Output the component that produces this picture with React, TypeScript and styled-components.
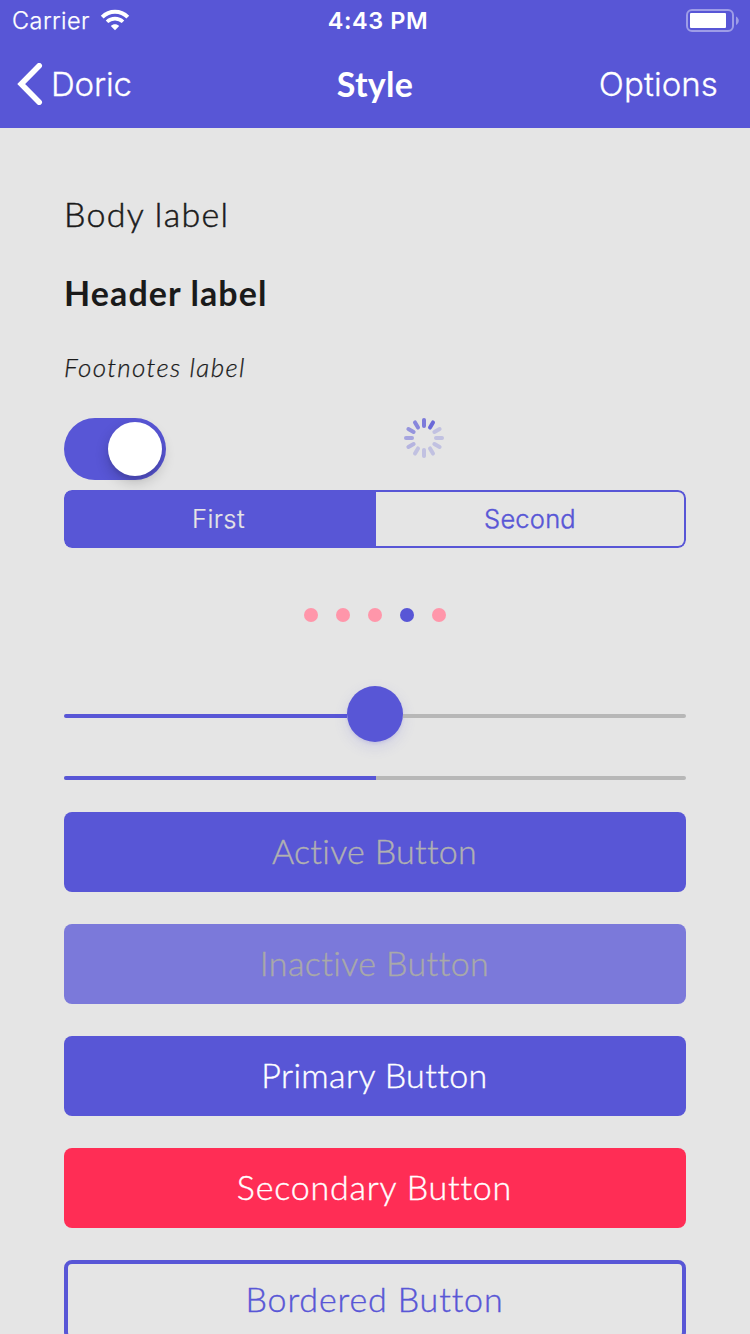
import React from "react";
import styled, { createGlobalStyle } from "styled-components";

const primary = "#5856d6";
const secondary = "#ff2d55";
const background = "#e5e5e5";
const track = "#b7b7b7";

const system = `Inter, "Liberation Sans", sans-serif`;
const brand = `Lato, "Liberation Sans", sans-serif`;

const GlobalStyle = createGlobalStyle`
  *, *::before, *::after { box-sizing: border-box; }
  html, body { margin: 0; padding: 0; height: 1334px; overflow: hidden; background: ${background}; }
`;

const Screen = styled.div`
  width: 750px;
  height: 1334px;
  overflow: hidden;
  background: ${background};
  display: flex;
  flex-direction: column;
`;

const Header = styled.header`
  flex: none;
  height: 128px;
  background: ${primary};
  color: #fff;
  font-family: ${system};
`;

const StatusBar = styled.div`
  display: grid;
  grid-template-columns: 1fr auto 1fr;
  align-items: center;
  height: 40px;
  padding: 0 11px 0 12px;
  font-size: 23.5px;
  line-height: 42px;
`;

const Carrier = styled.div`
  display: flex;
  align-items: center;
  gap: 11px;
  font-weight: 300;
  letter-spacing: 0.43px;
  -webkit-text-stroke: 0.25px currentColor;
`;

const Clock = styled.div`
  font-weight: 600;
  letter-spacing: 0.6px;
  padding-left: 5px;
`;

const BatterySlot = styled.div`
  display: flex;
  justify-content: flex-end;
`;

const NavBar = styled.nav`
  display: grid;
  grid-template-columns: 1fr auto 1fr;
  align-items: center;
  height: 88px;
  padding: 0 32px 0 17px;
  font-size: 33px;
  line-height: 88px;
  font-weight: 300;
  -webkit-text-stroke: 0.3px currentColor;
`;

const BackButton = styled.div`
  display: flex;
  align-items: center;
  gap: 8px;
  letter-spacing: -0.2px;
`;

const Title = styled.h1`
  margin: 0;
  padding-left: 15px;
  font: 700 34px/88px ${brand};
  letter-spacing: 0.3px;
  -webkit-text-stroke: 0;
`;

const OptionsButton = styled.div`
  text-align: right;
  letter-spacing: 0.1px;
`;

const Content = styled.main`
  display: flex;
  flex-direction: column;
  padding: 63px 64px 0;
`;

const Label = styled.div<{ $kind: "body" | "header" | "footnote" }>`
  height: ${(p) => (p.$kind === "body" ? 46 : 50)}px;
  line-height: ${(p) => (p.$kind === "body" ? 46 : 50)}px;
  margin-bottom: ${(p) => (p.$kind === "footnote" ? 26 : p.$kind === "body" ? 31 : 24)}px;
  color: #1a1a1a;
  font-family: ${brand};
  font-size: ${(p) => (p.$kind === "footnote" ? 26 : 34)}px;
  font-weight: ${(p) => (p.$kind === "header" ? 700 : 300)};
  font-style: ${(p) => (p.$kind === "footnote" ? "italic" : "normal")};
  letter-spacing: ${(p) => (p.$kind === "body" ? 1.3 : p.$kind === "header" ? 1.1 : 1.35)}px;
  -webkit-text-stroke: ${(p) => (p.$kind === "header" ? 0 : p.$kind === "body" ? 0.5 : 0.25)}px currentColor;
`;

const ControlRow = styled.div`
  display: grid;
  grid-template-columns: 1fr 1fr;
  height: 62px;
  margin-bottom: 10px;
`;

const Switch = styled.div`
  display: flex;
  justify-content: flex-end;
  width: 102px;
  height: 62px;
  padding: 4px;
  border-radius: 31px;
  background: ${primary};
`;

const SwitchKnob = styled.div`
  width: 54px;
  height: 54px;
  border-radius: 50%;
  background: #fff;
  box-shadow: 0 6px 14px rgba(0, 0, 0, 0.2), 0 4px 3px rgba(0, 0, 0, 0.06);
`;

const SpinnerSlot = styled.div`
  padding-left: 29px;
  line-height: 0;
`;

const Segmented = styled.div`
  display: flex;
  height: 58px;
  border-radius: 8px;
  overflow: hidden;
  margin-bottom: 60px;
`;

const Segment = styled.div<{ $selected?: boolean }>`
  flex: ${(p) => (p.$selected ? "0 0 312px" : "1")};
  padding-right: ${(p) => (p.$selected ? 3 : 0)}px;
  border: 2px solid ${primary};
  border-left-width: ${(p) => (p.$selected ? 2 : 0)}px;
  border-radius: ${(p) => (p.$selected ? "8px 0 0 8px" : "0 8px 8px 0")};
  text-align: center;
  font: 300 25.5px/54px ${system};
  letter-spacing: ${(p) => (p.$selected ? 0.4 : 0.2)}px;
  -webkit-text-stroke: ${(p) => (p.$selected ? 0.2 : 0.4)}px currentColor;
  color: ${(p) => (p.$selected ? background : primary)};
  background: ${(p) => (p.$selected ? primary : "transparent")};
`;

const Pager = styled.div`
  display: flex;
  justify-content: center;
  gap: 18px;
  margin-bottom: 64px;
`;

const Dot = styled.span<{ $current: boolean }>`
  width: 14px;
  height: 14px;
  border-radius: 50%;
  background: ${(p) => (p.$current ? primary : "#ff96aa")};
`;

const Slider = styled.div`
  display: flex;
  align-items: center;
  height: 56px;
  margin-bottom: 34px;
`;

const SliderTrack = styled.div<{ $filled?: boolean }>`
  flex: 1;
  height: 4px;
  margin-top: 4px;
  border-radius: ${(p) => (p.$filled ? "2px 0 0 2px" : "0 2px 2px 0")};
  background: ${(p) => (p.$filled ? primary : track)};
`;

const SliderThumb = styled.div`
  width: 56px;
  height: 56px;
  border-radius: 50%;
  background: ${primary};
  box-shadow: 0 5px 14px rgba(88, 86, 214, 0.15), 0 2px 3px rgba(88, 86, 214, 0.12);
`;

const Progress = styled.div`
  height: 4px;
  margin-bottom: 32px;
  border-radius: 2px;
  background: ${track};
  overflow: hidden;
`;

const ProgressFill = styled.div`
  width: 312px;
  height: 4px;
  background: ${primary};
`;

const Button = styled.button<{ $bg: string; $fg: string; $bordered?: boolean; $tracking: number }>`
  flex: none;
  display: flex;
  align-items: center;
  justify-content: center;
  height: 80px;
  margin: 0 0 32px;
  padding: 0 1px 2px 0;
  border: ${(p) => (p.$bordered ? `4px solid ${primary}` : "none")};
  border-radius: 8px;
  background: ${(p) => p.$bg};
  color: ${(p) => p.$fg};
  font: 300 34px/40px ${brand};
  letter-spacing: ${(p) => p.$tracking}px;
  -webkit-text-stroke: 0.4px currentColor;
`;

function WifiIcon() {
  return (
    <svg width="28" height="21" viewBox="0 1 28 21" overflow="visible" fill="none" stroke="#fff">
      <path d="M1.2 7.1C8.4 .1 19.6 .1 26.8 7.1" strokeWidth="4" />
      <path d="M6 11.8C10.5 7.5 17.5 7.5 22 11.8" strokeWidth="3.6" />
      <path d="M14 20.3L9.8 16.1C12.1 13.7 15.9 13.7 18.2 16.1Z" fill="#fff" stroke="none" />
    </svg>
  );
}

function BatteryIcon() {
  return (
    <svg width="53" height="24" viewBox="0 0 53 24">
      <rect x="1" y="1" width="46" height="21" rx="5" fill="none" stroke="#fff" strokeOpacity=".42" strokeWidth="2" />
      <rect x="4" y="4" width="36" height="15" rx="1" fill="#fff" />
      <path d="M50 7.5C53.7 9.5 53.7 14 50 16Z" fill="#fff" fillOpacity=".42" />
    </svg>
  );
}

function BackIcon() {
  return (
    <svg width="26" height="42" viewBox="0 0 26 42" fill="none" stroke="#fff" strokeWidth="5.6" strokeLinecap="round" strokeLinejoin="miter">
      <path d="M22.2 2.8L4.2 21L22.2 39.2" />
    </svg>
  );
}

const spokes = [0.75, 0.87, 0.25, 0.25, 0.25, 0.25, 0.25, 0.25, 0.34, 0.45, 0.57, 0.67];

function Spinner() {
  return (
    <svg width="40" height="40" viewBox="-20 -20 40 40">
      {spokes.map((opacity, i) => (
        <rect key={i} x="-2" y="-20" width="4" height="10" rx="2" fill={primary} fillOpacity={opacity} transform={`rotate(${i * 30})`} />
      ))}
    </svg>
  );
}

export default function App() {
  return (
    <Screen>
      <GlobalStyle />
      <Header>
        <StatusBar>
          <Carrier>
            Carrier
            <WifiIcon />
          </Carrier>
          <Clock>4:43 PM</Clock>
          <BatterySlot>
            <BatteryIcon />
          </BatterySlot>
        </StatusBar>
        <NavBar>
          <BackButton>
            <BackIcon />
            Doric
          </BackButton>
          <Title>Style</Title>
          <OptionsButton>Options</OptionsButton>
        </NavBar>
      </Header>
      <Content>
        <Label $kind="body">Body label</Label>
        <Label $kind="header">Header label</Label>
        <Label $kind="footnote">Footnotes label</Label>
        <ControlRow>
          <Switch>
            <SwitchKnob />
          </Switch>
          <SpinnerSlot>
            <Spinner />
          </SpinnerSlot>
        </ControlRow>
        <Segmented>
          <Segment $selected>First</Segment>
          <Segment>Second</Segment>
        </Segmented>
        <Pager>
          {[0, 1, 2, 3, 4].map((i) => (
            <Dot key={i} $current={i === 3} />
          ))}
        </Pager>
        <Slider>
          <SliderTrack $filled />
          <SliderThumb />
          <SliderTrack />
        </Slider>
        <Progress>
          <ProgressFill />
        </Progress>
        <Button $bg={primary} $fg="#b1b1b1" $tracking={0.3}>Active Button</Button>
        <Button $bg="#7b79da" $fg="#a9a9a9" $tracking={0.4}>Inactive Button</Button>
        <Button $bg={primary} $fg="#fff" $tracking={0.4}>Primary Button</Button>
        <Button $bg={secondary} $fg="#fff" $tracking={0.8}>Secondary Button</Button>
        <Button $bg="transparent" $fg={primary} $tracking={0.85} $bordered>Bordered Button</Button>
      </Content>
    </Screen>
  );
}
